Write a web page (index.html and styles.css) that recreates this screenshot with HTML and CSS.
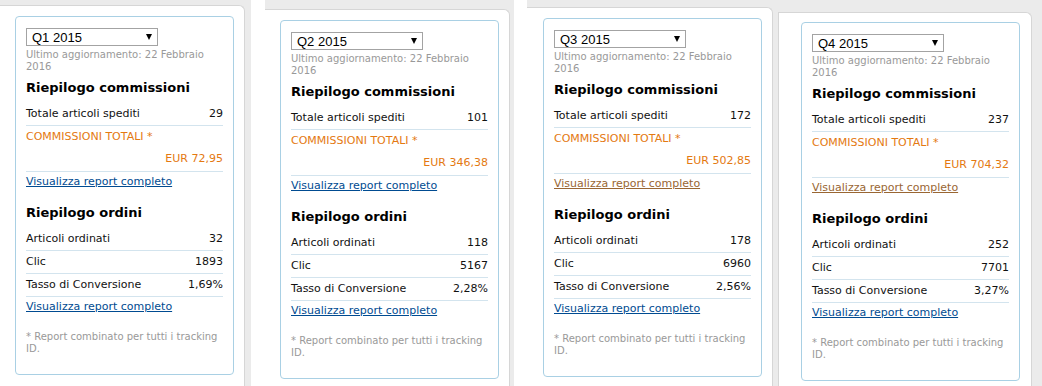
FILE: index.html
```html
<!DOCTYPE html>
<html lang="it">
<head>
    <meta charset="UTF-8">
    <title>Riepilogo trimestrale</title>
    <link rel="stylesheet" href="styles.css">
</head>
<body>
    <div class="page">
        <div class="col col-1">
            <div class="panel">
                <div class="card">
                    <div class="select"><span>Q1 2015</span><i class="caret"></i></div>
                    <p class="updated">Ultimo aggiornamento: 22 Febbraio 2016</p>
                    <h2>Riepilogo commissioni</h2>
                    <div class="row"><span>Totale articoli spediti</span><span>29</span></div>
                    <div class="row total">
                        <div>COMMISSIONI TOTALI *</div>
                        <div class="amount">EUR 72,95</div>
                    </div>
                    <a class="report" href="#">Visualizza report completo</a>
                    <h2 class="orders">Riepilogo ordini</h2>
                    <div class="row"><span>Articoli ordinati</span><span>32</span></div>
                    <div class="row"><span>Clic</span><span>1893</span></div>
                    <div class="row"><span>Tasso di Conversione</span><span>1,69%</span></div>
                    <a class="report" href="#">Visualizza report completo</a>
                    <p class="note">* Report combinato per tutti i tracking ID.</p>
                </div>
            </div>
        </div>

        <div class="col col-2">
            <div class="edge"></div>
            <div class="panel">
                <div class="card">
                    <div class="select"><span>Q2 2015</span><i class="caret"></i></div>
                    <p class="updated">Ultimo aggiornamento: 22 Febbraio 2016</p>
                    <h2>Riepilogo commissioni</h2>
                    <div class="row"><span>Totale articoli spediti</span><span>101</span></div>
                    <div class="row total">
                        <div>COMMISSIONI TOTALI *</div>
                        <div class="amount">EUR 346,38</div>
                    </div>
                    <a class="report" href="#">Visualizza report completo</a>
                    <h2 class="orders">Riepilogo ordini</h2>
                    <div class="row"><span>Articoli ordinati</span><span>118</span></div>
                    <div class="row"><span>Clic</span><span>5167</span></div>
                    <div class="row"><span>Tasso di Conversione</span><span>2,28%</span></div>
                    <a class="report" href="#">Visualizza report completo</a>
                    <p class="note">* Report combinato per tutti i tracking ID.</p>
                </div>
            </div>
        </div>

        <div class="col col-3">
            <div class="edge"></div>
            <div class="panel">
                <div class="card">
                    <div class="select"><span>Q3 2015</span><i class="caret"></i></div>
                    <p class="updated">Ultimo aggiornamento: 22 Febbraio 2016</p>
                    <h2>Riepilogo commissioni</h2>
                    <div class="row"><span>Totale articoli spediti</span><span>172</span></div>
                    <div class="row total">
                        <div>COMMISSIONI TOTALI *</div>
                        <div class="amount">EUR 502,85</div>
                    </div>
                    <a class="report visited" href="#">Visualizza report completo</a>
                    <h2 class="orders">Riepilogo ordini</h2>
                    <div class="row"><span>Articoli ordinati</span><span>178</span></div>
                    <div class="row"><span>Clic</span><span>6960</span></div>
                    <div class="row"><span>Tasso di Conversione</span><span>2,56%</span></div>
                    <a class="report" href="#">Visualizza report completo</a>
                    <p class="note">* Report combinato per tutti i tracking ID.</p>
                </div>
            </div>
        </div>

        <div class="col col-4">
            <div class="panel">
                <div class="card">
                    <div class="select"><span>Q4 2015</span><i class="caret"></i></div>
                    <p class="updated">Ultimo aggiornamento: 22 Febbraio 2016</p>
                    <h2>Riepilogo commissioni</h2>
                    <div class="row"><span>Totale articoli spediti</span><span>237</span></div>
                    <div class="row total">
                        <div>COMMISSIONI TOTALI *</div>
                        <div class="amount">EUR 704,32</div>
                    </div>
                    <a class="report visited" href="#">Visualizza report completo</a>
                    <h2 class="orders">Riepilogo ordini</h2>
                    <div class="row"><span>Articoli ordinati</span><span>252</span></div>
                    <div class="row"><span>Clic</span><span>7701</span></div>
                    <div class="row"><span>Tasso di Conversione</span><span>3,27%</span></div>
                    <a class="report" href="#">Visualizza report completo</a>
                    <p class="note">* Report combinato per tutti i tracking ID.</p>
                </div>
            </div>
        </div>
    </div>
</body>
</html>
```

FILE: styles.css
```css
body {
    margin: 0;
    background-color: #ebebeb;
    font-family: "DejaVu Sans", Verdana, sans-serif;
    font-size: 11px;
    color: #111;
    overflow: hidden;
}
.page {
    display: flex;
    height: 386px;
}
.col {
    display: flex;
    height: 100%;
    background-color: #ebebeb;
}
.col-1 { width: 251px; }
.col-2 { width: 263px; }
.col-3 { width: 264px; }
.col-4 { width: 264px; }
.edge {
    background-color: #fff;
    height: 100%;
}
.col-2 .edge { width: 14px; }
.col-3 .edge { width: 13px; }
.panel {
    background-color: #fff;
    border-top: 1px solid #d6d6d6;
    border-right: 1px solid #d6d6d6;
    border-top-right-radius: 6px;
    box-sizing: border-box;
}
.col-1 .panel {
    width: 245px;
    margin-top: 5px;
    padding: 10px 0 0 15px;
}
.col-2 .panel {
    width: 245px;
    margin-top: 9px;
    padding: 10px 0 0 15px;
}
.col-3 .panel {
    width: 246px;
    margin-top: 7px;
    padding: 10px 0 0 16px;
}
.col-4 .panel {
    width: 254px;
    margin-top: 12px;
    padding: 9px 0 0 22px;
    border-left: 1px solid #d6d6d6;
}
.card {
    width: 219px;
    box-sizing: border-box;
    border: 1px solid #a9d0e4;
    border-radius: 4px;
    padding: 11px 10px 19px;
}
.select {
    display: flex;
    align-items: center;
    justify-content: space-between;
    width: 132px;
    height: 18px;
    box-sizing: border-box;
    border: 1px solid #a3a3a3;
    padding: 0 5px 0 5px;
    font-family: "Liberation Sans", Arial, sans-serif;
    font-size: 13px;
    color: #000;
}
.caret {
    width: 0;
    height: 0;
    border-left: 3.5px solid transparent;
    border-right: 3.5px solid transparent;
    border-top: 6px solid #000;
}
.updated {
    margin: 3px 0 0;
    font-size: 10px;
    line-height: 12px;
    color: #999;
}
h2 {
    margin: 7px 0 0;
    font-size: 13px;
    line-height: 16px;
    font-weight: bold;
    color: #000;
}
h2.orders {
    margin-top: 16px;
}
.row {
    display: flex;
    justify-content: space-between;
    padding: 4px 0;
    line-height: 14px;
    border-bottom: 1px solid #d3e4ee;
}
h2 + .row {
    margin-top: 7px;
}
.total {
    display: block;
    color: #e47911;
    padding-bottom: 5px;
}
.amount {
    margin-top: 8px;
    text-align: right;
}
.report {
    display: block;
    padding-top: 3px;
    line-height: 14px;
    color: #004b91;
    text-decoration: underline;
}
.report.visited {
    color: #996633;
}
.note {
    margin: 17px 0 0;
    font-size: 10px;
    line-height: 12px;
    color: #999;
}
```
